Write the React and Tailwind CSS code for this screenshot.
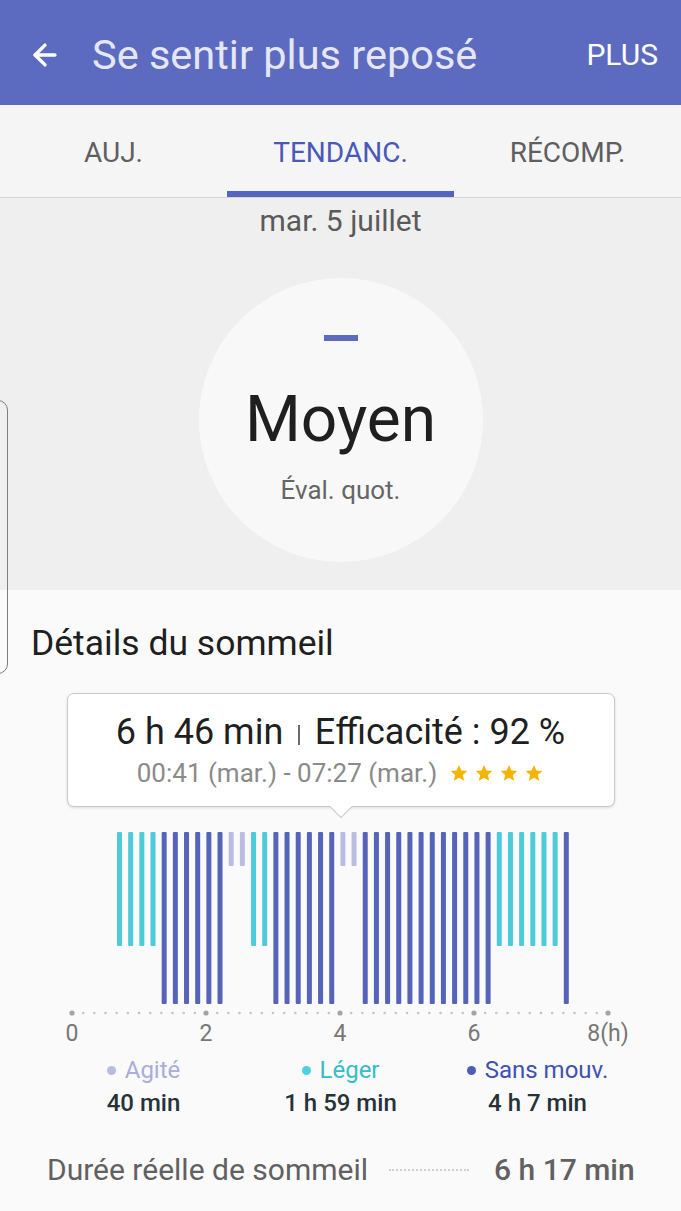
import { ArrowLeft } from 'lucide-react';

const BARS = 'CCCCDDDDDDLLCCDDDDDDLLDDDDDDDDDDDDCCCCCCD'.split('');

const BAR_STYLE = {
  C: { fill: '#4ccbda', bottom: 126 },
  D: { fill: '#5563b9', bottom: 184 },
  L: { fill: '#b9bde2', bottom: 46 },
};

function SleepChart() {
  const tick = (h) => 72 + h * 67;
  const dots = Array.from({ length: 49 }, (_, i) => i);
  return (
    <svg width="681" height="230" viewBox="0 0 681 230" className="block">
      {BARS.map((b, i) => {
        const cx = 119.5 + i * 11.17;
        return (
          <rect
            key={i}
            x={cx - 2.5}
            y={12}
            width={5}
            height={BAR_STYLE[b].bottom - 12}
            rx={1}
            fill={BAR_STYLE[b].fill}
          />
        );
      })}
      {dots.map((i) => {
        const big = i % 12 === 0;
        return (
          <circle
            key={i}
            cx={72 + i * (536 / 48)}
            cy={193}
            r={big ? 2.6 : 1.3}
            fill={big ? '#a4a4a4' : '#c4c4c4'}
          />
        );
      })}
      {[0, 2, 4, 6].map((h) => (
        <text key={h} x={tick(h)} y={221} textAnchor="middle" fontSize="23" fill="#777777" fontFamily="Roboto, sans-serif">
          {h}
        </text>
      ))}
      <text x={tick(8)} y={221} textAnchor="middle" fontSize="23" fill="#777777" fontFamily="Roboto, sans-serif">
        8(h)
      </text>
    </svg>
  );
}

function Stars() {
  return (
    <span className="ml-[12px] inline-flex items-center gap-[5px]">
      {[0, 1, 2, 3].map((i) => (
        <svg key={i} width="20" height="20" viewBox="0 0 24 24">
          <path d="M12 2.5l2.9 6.6 7.1.6-5.4 4.7 1.6 7-6.2-3.7-6.2 3.7 1.6-7L2 9.7l7.1-.6z" fill="#f5b400" />
        </svg>
      ))}
    </span>
  );
}

function LegendItem({ dot, color, label, value }) {
  return (
    <div className="flex flex-col items-center">
      <div className="flex items-center text-[24px] leading-[24px]" style={{ color }}>
        <span className="mr-[9px] h-[9px] w-[9px] rounded-full" style={{ backgroundColor: dot }} />
        {label}
      </div>
      <div className="mt-[9px] text-[24px] leading-[24px] font-medium text-[#263238]">{value}</div>
    </div>
  );
}

export default function App() {
  return (
    <div className="relative h-[1211px] w-[681px] overflow-hidden bg-[#fafafa] font-['Roboto',sans-serif]">
      {/* header */}
      <header className="flex h-[105px] items-center bg-[#5c6bc0] pl-[28px] pr-[23px] pt-[5px]">
        <ArrowLeft size={34} strokeWidth={2.4} className="text-white" />
        <h1 className="ml-[30px] text-[41.5px] leading-none text-[#e5e7f7]">Se sentir plus reposé</h1>
        <span className="ml-auto text-[30px] leading-none text-white">PLUS</span>
      </header>

      {/* tabs */}
      <nav className="grid h-[93px] grid-cols-3 border-b border-[#d4d4d4] bg-[#f5f5f5] text-[28px] leading-none">
        <div className="flex flex-col">
          <div className="flex flex-1 items-center justify-center pt-[9px] text-[#5f5f5f]">AUJ.</div>
          <div className="h-[6px]" />
        </div>
        <div className="flex flex-col">
          <div className="flex flex-1 items-center justify-center pt-[9px] text-[#4a59b8]">TENDANC.</div>
          <div className="h-[6px] bg-[#5563c1]" />
        </div>
        <div className="flex flex-col">
          <div className="flex flex-1 items-center justify-center pt-[9px] text-[#5f5f5f]">RÉCOMP.</div>
          <div className="h-[6px]" />
        </div>
      </nav>

      {/* daily rating */}
      <section className="flex h-[392px] flex-col items-center bg-[#efefef] pt-[5px]">
        <div className="text-[30px] leading-[36px] text-[#5a5a5a]">mar. 5 juillet</div>
        <div className="mt-[39px] flex h-[284px] w-[284px] flex-col items-center rounded-full bg-[#f8f8f8] pt-[57px]">
          <div className="h-[6px] w-[34px] bg-[#5c6bc0]" />
          <div className="mt-[47px] text-[64px] leading-[64px] text-[#1f1f1f]">Moyen</div>
          <div className="mt-[25px] text-[26px] leading-[26px] text-[#666666]">Éval. quot.</div>
        </div>
      </section>

      {/* sleep details */}
      <section className="pt-[36px]">
        <h2 className="pl-[31px] text-[35.5px] leading-[35px] text-[#1f1f1f]">Détails du sommeil</h2>

        <div className="relative mx-auto mt-[32px] w-[548px] rounded-[7px] border border-[#c9c9c9] bg-white pb-[20px] pt-[20px] shadow-[0_1px_3px_rgba(0,0,0,0.12)]">
          <div className="flex items-center justify-center text-[36px] leading-[36px] text-[#1f1f1f]">
            6 h 46 min
            <span className="mx-[15px] mt-[6px] inline-block h-[20px] w-[1.5px] bg-[#6a6a6a]" />
            Efficacité : 92 %
          </div>
          <div className="mt-[10px] flex items-center justify-center text-[26px] leading-[26px] text-[#8a8a8a]">
            00:41 (mar.) - 07:27 (mar.)
            <Stars />
          </div>
          <div className="absolute bottom-[-9px] left-1/2 h-[16px] w-[16px] -translate-x-1/2 rotate-45 border-b border-r border-[#c9c9c9] bg-white" />
        </div>

        <div className="mt-[13px]">
          <SleepChart />
        </div>

        <div className="mx-auto mt-[8px] grid w-[591px] grid-cols-3">
          <LegendItem dot="#b8bce0" color="#a8addb" label="Agité" value="40 min" />
          <LegendItem dot="#4dd0e1" color="#35bccc" label="Léger" value="1 h 59 min" />
          <LegendItem dot="#4c5cb8" color="#3f51b5" label="Sans mouv." value="4 h 7 min" />
        </div>

        <div className="mt-[40px] flex items-center pl-[47px] text-[30px] leading-[30px] text-[#616161]">
          <span>Durée réelle de sommeil</span>
          <span className="ml-[21px] w-[80px] border-t-2 border-dotted border-[#cfcfcf]" />
          <span className="ml-[25px] font-medium">6 h 17 min</span>
        </div>
      </section>

      {/* edge panel handle */}
      <div className="absolute left-[-14px] top-[400px] h-[274px] w-[22px] rounded-[10px] border-[1.5px] border-[#7d7d7d]" />
    </div>
  );
}
